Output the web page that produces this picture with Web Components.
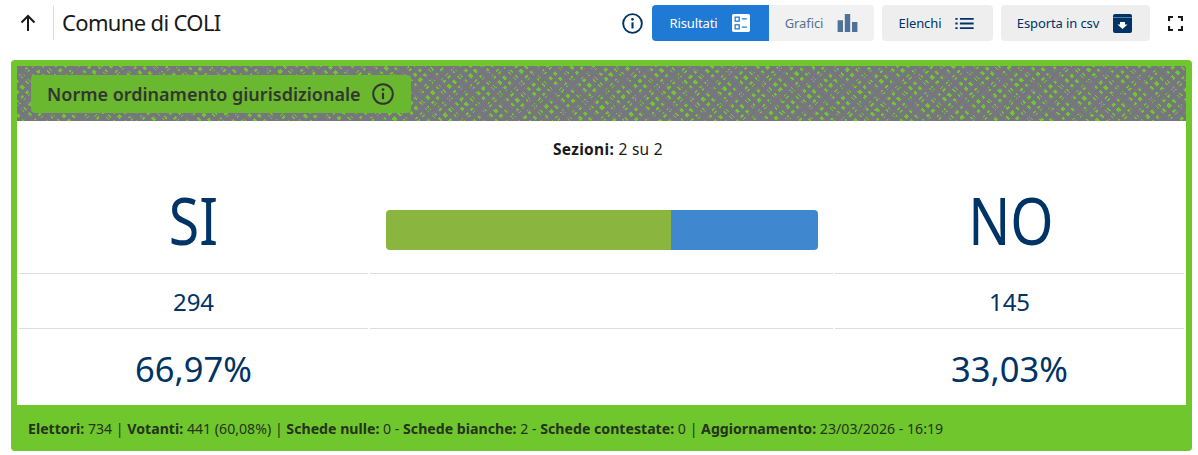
<!DOCTYPE html>
<html lang="it">
<head>
<meta charset="utf-8">
<title>Comune di COLI</title>
<style>
  html, body { margin: 0; background: #fff; }
  body { font-family: "Noto Sans", "Open Sans", sans-serif; color: #19191a; width: 1198px; height: 455px; overflow: hidden; }
</style>
</head>
<body>
<res-toolbar title="Comune di COLI">
  <res-button variant="active" label="Risultati"><svg viewBox="0 0 20 20" width="18" height="18"><rect width="20" height="20" rx="2" fill="#fff"/><g fill="none" stroke="#1f7ad6" stroke-width="1.400"><rect x="3.500" y="3.500" width="4.500" height="4.500"/><rect x="3.500" y="12" width="4.500" height="4.500"/><path d="M11 5.500h5.500M11 14.500h5.500"/></g></svg></res-button>
  <res-button variant="off" label="Grafici"><svg viewBox="0 0 22 20" width="21" height="18"><path fill="#4f7299" d="M0 7h6v13H0zM8 0h6v20H8zM16 9h6v11h-6z"/></svg></res-button>
  <res-button label="Elenchi" class="gap" style="width:111px"><svg viewBox="0 0 20 12" width="19" height="11"><path fill="#003366" d="M0 0h2.500v2H0zM0 5h2.500v2H0zM0 10h2.500v2H0zM5 0h15v2H5zM5 5h15v2H5zM5 10h15v2H5z"/></svg></res-button>
  <res-button label="Esporta in csv" class="gap" style="width:149px"><svg viewBox="0 0 19 19" width="19" height="19"><path fill="#003366" d="M2 0h15a2 2 0 0 1 2 2v15a2 2 0 0 1-2 2H2a2 2 0 0 1-2-2V2a2 2 0 0 1 2-2z"/><path fill="none" stroke="#5b7fa6" d="M0 3.500h19"/><path fill="#fff" d="M7 8h5v2.500h2.500l-5 4.500-5-4.500H7z"/></svg></res-button>
</res-toolbar>
<res-result-card heading="Norme ordinamento giurisdizionale">
  <res-choice slot="left" name="SI" votes="294" pct="66,97%"></res-choice>
  <res-bar slot="center" yes="66"></res-bar>
  <res-choice slot="right" name="NO" votes="145" pct="33,03%"></res-choice>
  <span slot="sections"><b>Sezioni:</b> 2 su 2</span>
  <span slot="footer"><b>Elettori:</b> 734 | <b>Votanti:</b> 441 (60,08%) | <b>Schede nulle:</b> 0 - <b>Schede bianche:</b> 2 - <b>Schede contestate:</b> 0 | <b>Aggiornamento:</b> 23/03/2026 - 16:19</span>
</res-result-card>
<script>
const FONT = '"Noto Sans", "Open Sans", sans-serif';

const INFO_ICON = (size, color) => `
  <svg viewBox="0 0 22 22" width="${size}" height="${size}" fill="none">
    <circle cx="11" cy="11" r="9.800" stroke="${color}" stroke-width="2"/>
    <circle cx="11" cy="6.600" r="1.400" fill="${color}"/>
    <path d="M11 9.800v6.400" stroke="${color}" stroke-width="2.200"/>
  </svg>`;

class ResButton extends HTMLElement {
  connectedCallback() {
    if (this.shadowRoot) return;
    const root = this.attachShadow({ mode: 'open' });
    root.innerHTML = `
      <style>
        :host {
          display: flex; align-items: center; justify-content: center; gap: 14px;
          height: 36px; padding: 0 18px 0 16px; box-sizing: border-box; white-space: nowrap;
          background: #eeeeee; color: #003366; border-radius: 4px;
          font: 13px ${FONT}; letter-spacing: -.1px;
        }
        :host(.gap) { margin-left: 8px; }
        :host([variant="active"]) { background: #1f7ad6; color: #fff; border-radius: 4px 0 0 4px; width: 117px; }
        :host([variant="off"]) { background: #f1f1f2; color: #55718f; border-radius: 0 4px 4px 0; width: 105px; padding-right: 16px; }
        ::slotted(svg) { display: block; flex: none; }
      </style>
      <span>${this.getAttribute('label')}</span><slot></slot>`;
  }
}
customElements.define('res-button', ResButton);

class ResToolbar extends HTMLElement {
  connectedCallback() {
    if (this.shadowRoot) return;
    const root = this.attachShadow({ mode: 'open' });
    root.innerHTML = `
      <style>
        :host { display: flex; align-items: center; height: 46px; padding: 0 15px 0 19px; box-sizing: border-box; }
        .up { width: 18px; height: 18px; display: block; margin-right: 16px; }
        .sep { width: 1px; height: 34px; background: #dcdcdc; margin-right: 8px; }
        h1 { margin: 0 0 3px; font: 400 22px ${FONT}; letter-spacing: -.65px; color: #19191a; flex: 1; }
        .info { margin-right: 9px; display: block; line-height: 0; }
        .tabs { display: flex; }
        .full { margin-left: 18px; display: block; }
      </style>
      <svg class="up" viewBox="0 0 18 18" fill="none" stroke="#19191a" stroke-width="2"><path d="M9 17V2M2.500 8.500 9 2l6.500 6.500"/></svg>
      <div class="sep"></div>
      <h1>${this.getAttribute('title')}</h1>
      <span class="info">${INFO_ICON(21, '#003366')}</span>
      <div class="tabs"><slot></slot></div>
      <svg class="full" width="15" height="15" viewBox="0 0 15 15" fill="none" stroke="#19191a" stroke-width="2.200"><path d="M1 5V1h4M10 1h4v4M14 10v4h-4M5 14H1v-4"/></svg>`;
  }
}
customElements.define('res-toolbar', ResToolbar);

class ResChoice extends HTMLElement {
  connectedCallback() {
    if (this.shadowRoot) return;
    const root = this.attachShadow({ mode: 'open' });
    root.innerHTML = `
      <style>
        :host { display: grid; grid-template-rows: 97px 55px 76px; color: #003366; text-align: center; }
        div { display: flex; align-items: center; justify-content: center; border-bottom: 1px solid #ddd; box-sizing: border-box; }
        div:last-child { border: 0; }
        .name { font-size: 66px; padding: 0 0 13px 0; }
        :host([name="SI"]) .name { padding-right: 1px; }
        :host([name="NO"]) .name { padding-left: 3px; }
        .name span { display: block; transform: scaleX(.84); }
        .votes { font-size: 24px; padding-top: 1px; }
        .pct { font-size: 34.500px; padding-top: 2px; }
      </style>
      <div class="name"><span>${this.getAttribute('name')}</span></div>
      <div class="votes">${this.getAttribute('votes')}</div>
      <div class="pct">${this.getAttribute('pct')}</div>`;
  }
}
customElements.define('res-choice', ResChoice);

class ResBar extends HTMLElement {
  connectedCallback() {
    if (this.shadowRoot) return;
    const yes = parseFloat(this.getAttribute('yes'));
    const root = this.attachShadow({ mode: 'open' });
    root.innerHTML = `
      <style>
        :host { display: grid; grid-template-rows: 97px 55px 76px; }
        div { border-bottom: 1px solid #ddd; box-sizing: border-box; }
        .top { display: flex; align-items: center; padding: 9px 15px 0 16px; }
        .bar { display: flex; width: 100%; height: 40px; border: 0; border-radius: 4px; overflow: hidden; }
        .yes { background: #8ab53f; border: 0; }
        .no { background: #3f88d0; border: 0; flex: 1; }
        .last { border: 0; }
      </style>
      <div class="top"><div class="bar"><div class="yes" style="width:${yes}%"></div><div class="no"></div></div></div>
      <div></div>
      <div class="last"></div>`;
  }
}
customElements.define('res-bar', ResBar);

class ResResultCard extends HTMLElement {
  connectedCallback() {
    if (this.shadowRoot) return;
    const root = this.attachShadow({ mode: 'open' });
    root.innerHTML = `
      <style>
        :host {
          display: block; margin: 14px 6px 0 11px; background: #6fc62d;
          border-radius: 4px; padding: 6px 6px 0 6px; height: 391px; box-sizing: border-box;
        }
        .head {
          height: 55px; box-sizing: border-box; padding: 9px 14px; display: flex; align-items: flex-start;
          background-color: #6fc62d;
          background-image:
            repeating-linear-gradient(44deg, #76777d 0 3.500px, transparent 3.500px 7.600px),
            repeating-linear-gradient(-46deg, #76777d 0 3.500px, transparent 3.500px 8.300px),
            repeating-linear-gradient(47deg, #7b7c80 0 2px, transparent 2px 5.700px),
            repeating-linear-gradient(-42deg, #7b7c80 0 2px, transparent 2px 6.200px);
        }
        .tag {
          height: 38px; box-sizing: border-box; padding: 0 17px 0 16px; display: flex; align-items: center; gap: 11px;
          background: #6ab82f; border-radius: 4px; color: #33362f; font: 600 18px ${FONT};
        }
        .tag svg { display: block; }
        .body { background: #fff; height: 284px; }
        .sections { height: 56px; box-sizing: border-box; padding: 19px 0 0 13px; text-align: center; font-size: 15.500px; letter-spacing: .3px; color: #19191a; line-height: 18px; }
        .cols { display: grid; grid-template-columns: 349px 463px 349px; column-gap: 2px; padding-left: 2px; }
        .foot { height: 46px; display: flex; align-items: center; padding: 0 11px; font-size: 14.150px; color: #26331c; }
      </style>
      <div class="head"><div class="tag">${this.getAttribute('heading')}${INFO_ICON(22, '#33362f')}</div></div>
      <div class="body">
        <div class="sections"><slot name="sections"></slot></div>
        <div class="cols"><slot name="left"></slot><slot name="center"></slot><slot name="right"></slot></div>
      </div>
      <div class="foot"><slot name="footer"></slot></div>`;
  }
}
customElements.define('res-result-card', ResResultCard);
</script>
</body>
</html>
